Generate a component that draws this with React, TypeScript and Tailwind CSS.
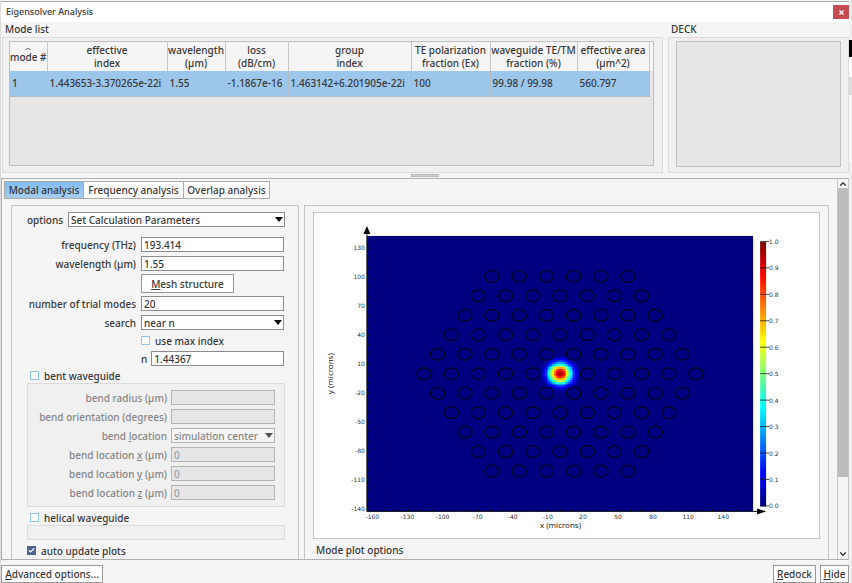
import React from 'react';
import { Check, ChevronDown, ChevronUp, X } from 'lucide-react';

interface ModeColumn {
  width: string;
  title: string[];
  value: string;
}

interface BendField {
  id: string;
  label: React.ReactNode;
  value: string;
}

const columns: ModeColumn[] = [
  { width: 'w-[37px]', title: ['mode #'], value: '1' },
  { width: 'w-[120px]', title: ['effective', 'index'], value: '1.443653-3.370265e-22i' },
  { width: 'w-[58px]', title: ['wavelength', '(µm)'], value: '1.55' },
  { width: 'w-[63px]', title: ['loss', '(dB/cm)'], value: '-1.1867e-16' },
  { width: 'w-[123px]', title: ['group', 'index'], value: '1.463142+6.201905e-22i' },
  { width: 'w-[79px]', title: ['TE polarization', 'fraction (Ex)'], value: '100' },
  { width: 'w-[87px]', title: ['waveguide TE/TM', 'fraction (%)'], value: '99.98 / 99.98' },
  { width: 'w-[72px]', title: ['effective area', '(µm^2)'], value: '560.797' },
];

const inputClass = 'h-[15px] w-full min-w-0 border border-[#8c8c8c] bg-white px-0.5 leading-3 outline-none';
const disabledClass = 'h-[15px] w-[104px] border border-[#b4b4b4] bg-[#e6e6e6] px-0.5 leading-3 text-[#8fa0a8]';
const buttonClass = 'border border-[#999] bg-white whitespace-nowrap';

// Plot geometry, in svg units
const plot = { left: 53, top: 23, right: 440, bottom: 299 };
const px = (x: number) => 247 + x * 1.172;
const py = (y: number) => 161 - y * 0.968;

const xTicks = [-160, -130, -100, -70, -40, -10, 20, 50, 80, 110, 140];
const yTicks = [130, 100, 70, 40, 10, -20, -50, -80, -110, -140];
const xMinor = Array.from({ length: 33 }, (_, i) => -160 + i * 10);
const yMinor = Array.from({ length: 28 }, (_, i) => -140 + i * 10);

// Hexagonal lattice with the centre hole missing
const holes: { x: number; y: number }[] = [];
for (let row = -5; row <= 5; row++) {
  const count = 11 - Math.abs(row);
  for (let i = 0; i < count; i++) {
    const offset = i - (count - 1) / 2;
    if (row === 0 && offset === 0) continue;
    holes.push({ x: 246.5 + offset * 27.25, y: 161 + row * 19.5 });
  }
}

const jet = (v: number) => {
  const channel = (centre: number) =>
    Math.round(255 * Math.max(0, Math.min(1, 1.5 - Math.abs(4 * v - centre))));
  return `rgb(${channel(3)},${channel(2)},${channel(1)})`;
};

const cell = 1.8;
const modeCells: { x: number; y: number; color: string }[] = [];
for (let j = -11; j <= 11; j++) {
  for (let i = -12; i <= 12; i++) {
    const v = Math.exp(-((i * cell) ** 2) / 132 - ((j * cell) ** 2) / 104);
    if (v < 0.03) continue;
    modeCells.push({ x: 246.5 + (i - 0.5) * cell, y: 161 + (j - 0.5) * cell, color: jet(v - 0.03) });
  }
}

const ModePlot: React.FC = () => (
  <svg viewBox="0 0 506 326" className="block w-full border border-[#c4c4c4] bg-white font-['DejaVu_Sans'] text-[6px] font-normal" role="img" aria-label="Mode profile">
    <defs>
      <linearGradient id="jet" x1="0" y1="1" x2="0" y2="0">
        {Array.from({ length: 17 }, (_, i) => (
          <stop key={i} offset={i / 16} stopColor={jet(i / 16)} />
        ))}
      </linearGradient>
    </defs>

    <rect x={plot.left} y={plot.top} width={plot.right - plot.left} height={plot.bottom - plot.top} fill="#000080" />
    <g shapeRendering="crispEdges">
      {modeCells.map((c) => (
        <rect key={`${c.x} ${c.y}`} x={c.x} y={c.y} width={cell} height={cell} fill={c.color} />
      ))}
    </g>
    <g fill="none" stroke="#00001e" strokeWidth="1.2">
      {holes.map((h) => (
        <ellipse key={`${h.x} ${h.y}`} cx={h.x} cy={h.y} rx="7.2" ry="5.9" />
      ))}
    </g>

    <g stroke="#111" strokeWidth="1">
      <path d={`M${plot.left} 18V${plot.bottom}H449`} fill="none" />
      {xMinor.map((x) => <path key={x} d={`M${px(x)} 299v-2`} />)}
      {yMinor.map((y) => <path key={y} d={`M53 ${py(y)}h3`} />)}
    </g>
    <path d="M53 13l3.5 8h-7zM453 299l-9 -3v6z" fill="#000" />

    <g fill="#333" textAnchor="end">
      {yTicks.map((y) => <text key={y} x="51" y={py(y) + 2}>{y}</text>)}
    </g>
    <g fill="#333" textAnchor="middle">
      {xTicks.map((x) => <text key={x} x={px(x) - 1} y="307">{x}</text>)}
    </g>
    <g fill="#222" textAnchor="middle" className="font-['Noto_Sans'] text-[8px]">
      <text x="247" y="316">x (microns)</text>
      <text x="19" y="161" transform="rotate(-90 19 161)">y (microns)</text>
    </g>

    <rect x="447" y="29" width="6" height="265" fill="url(#jet)" />
    {Array.from({ length: 11 }, (_, i) => (
      <g key={i}>
        <path d={`M447 ${293.5 - i * 26.5}h9`} stroke="#111" strokeOpacity="0.75" />
        <text x="456" y={296 - i * 26.5} fill="#333">{(i / 10).toFixed(1)}</text>
      </g>
    ))}
  </svg>
);

const Arrow: React.FC<{ muted?: boolean }> = ({ muted }) => (
  <svg viewBox="0 0 8 5" className={`pointer-events-none absolute top-[5px] right-[2px] h-[5px] w-2 ${muted ? 'text-[#555]' : 'text-black'}`}>
    <path d="M0 0h8L4 5z" fill="currentColor" />
  </svg>
);

const Tick: React.FC<{ id: string; checked?: boolean; children: React.ReactNode }> = ({ id, checked, children }) => (
  <div className="flex h-[15px] items-center gap-[5px]">
    <span className="relative flex">
      <input
        id={id}
        type="checkbox"
        defaultChecked={checked}
        className="peer size-[9px] appearance-none border border-[#94c4ea] bg-white checked:border-[#50648c] checked:bg-[#50648c]"
      />
      <Check className="pointer-events-none absolute top-px left-px hidden size-[7px] text-white peer-checked:block" strokeWidth={4} />
    </span>
    <label htmlFor={id}>{children}</label>
  </div>
);

const ModeList: React.FC = () => (
  <section className="flex min-w-0 flex-1 flex-col">
    <h2 className="h-[15px] px-[3px] leading-[14px]">Mode list</h2>
    <div className="h-[136px] border border-[#dcdcdc] bg-[#f0f0f0] pt-[3px] pr-2 pl-1.5">
      <div className="h-[125px] overflow-hidden border border-[#c0c0c0] bg-[#e6e6e6]">
        <table className="w-full table-fixed border-collapse text-left whitespace-nowrap">
          <thead>
            <tr className="h-[29px] bg-[#f5f5f5]">
              {columns.map((col, i) => (
                <th key={i} className={`${col.width} border-r border-[#c8c8c8] p-0 text-center leading-[13px] font-medium`}>
                  {i === 0 && <ChevronUp className="mx-auto -mb-px h-[6px] w-2.5" strokeWidth={2} preserveAspectRatio="none" />}
                  {col.title.map((line) => (
                    <span key={line} className="flex justify-center">{line}</span>
                  ))}
                  {i === 0 && <span className="block h-1" />}
                </th>
              ))}
              <th className="w-[4px] p-0" />
            </tr>
          </thead>
          <tbody>
            <tr className="h-[25px]">
              {columns.map((col, i) => (
                <td key={i} className="border-r border-b border-[#b4bec8] bg-[#9cc6ea] p-0 pl-0.5">{col.value}</td>
              ))}
              <td />
            </tr>
          </tbody>
        </table>
      </div>
    </div>
  </section>
);

const CalculationForm: React.FC = () => {
  const bendTop: BendField[] = [
    { id: 'radius', label: 'bend radius (µm)', value: '' },
    { id: 'orientation', label: 'bend orientation (degrees)', value: '' },
  ];
  const bendLocation: BendField[] = ['x', 'y', 'z'].map((axis) => ({
    id: `location-${axis}`,
    label: <>bend location <u>{axis}</u> (µm)</>,
    value: '0',
  }));

  const renderBend = (field: BendField) => (
    <React.Fragment key={field.id}>
      <label htmlFor={field.id}>{field.label}</label>
      <input id={field.id} disabled defaultValue={field.value} className={disabledClass} />
    </React.Fragment>
  );

  return (
    <div className="w-72 shrink-0 overflow-hidden border border-b-0 border-[#c4c4c4] pt-[6px] pr-[13px] pl-[15px]">
      <div className="flex items-center justify-end gap-[5px]">
        <label htmlFor="options">options</label>
        <div className="relative w-[217px]">
          <select id="options" className={`${inputClass} block appearance-none`}>
            <option>Set Calculation Parameters</option>
          </select>
          <Arrow />
        </div>
      </div>

      <div className="mt-2.5 grid grid-cols-[1fr_143px] items-center gap-x-[5px] gap-y-1 pr-px text-right">
        <label htmlFor="frequency">frequency (THz)</label>
        <input id="frequency" defaultValue="193.414" className={inputClass} />
        <label htmlFor="wavelength">wavelength (µm)</label>
        <input id="wavelength" defaultValue="1.55" className={inputClass} />
        <button className={`${buttonClass} col-start-2 -my-px h-[19px] w-[93px]`}><u>M</u>esh structure</button>
        <label htmlFor="trials">number of trial modes</label>
        <input id="trials" defaultValue="20" className={inputClass} />
        <label htmlFor="search">search</label>
        <div className="relative">
          <select id="search" className={`${inputClass} block appearance-none`}>
            <option>near n</option>
          </select>
          <Arrow />
        </div>
        <div className="col-start-2 -my-px text-left">
          <Tick id="max-index">use max index</Tick>
        </div>
        <div className="col-start-2 flex items-center gap-1">
          <label htmlFor="index-n">n</label>
          <input id="index-n" defaultValue="1.44367" className={inputClass} />
        </div>
      </div>

      <div className="mt-0.5 pl-[3px]">
        <Tick id="bent">bent waveguide</Tick>
      </div>
      <fieldset className="grid grid-cols-[1fr_104px] items-center gap-x-1 gap-y-1 border border-[#dcdcdc] bg-[#f0f0f0] py-[6px] pr-[9px] text-right text-[#868686]">
        {bendTop.map(renderBend)}
        <label htmlFor="location">bend <u>l</u>ocation</label>
        <div className="relative">
          <select id="location" disabled className="block h-[15px] w-full appearance-none border border-[#b4b4b4] bg-[#f5f5f5] px-0.5 leading-3 opacity-100">
            <option>simulation center</option>
          </select>
          <Arrow muted />
        </div>
        {bendLocation.map(renderBend)}
      </fieldset>

      <div className="mt-[3px] pl-[3px]">
        <Tick id="helical">helical waveguide</Tick>
      </div>
      <div className="h-[15px] border border-[#dcdcdc] bg-[#f0f0f0]" />
      <div className="mt-[3px]">
        <Tick id="auto-update" checked>auto update plots</Tick>
      </div>
    </div>
  );
};

const App: React.FC = () => {
  const tabs = ['Modal analysis', 'Frequency analysis', 'Overlap analysis'];

  return (
    <div className="flex h-screen overflow-hidden bg-[#f5f5f5] font-['Noto_Sans',sans-serif] text-[10px] leading-[14px] font-medium text-[#383838]">
      <main className="flex min-w-0 flex-1 flex-col border-l border-[#dcdcdc]">
        <header className="mt-px flex h-[21px] shrink-0 items-center justify-between border-t border-[#a8a8a8] bg-white pl-[5px] text-[9px]">
          <h1 className="font-medium">Eigensolver Analysis</h1>
          <button aria-label="Close" className="flex h-[14px] w-4 items-center justify-center bg-[#c44d54] text-white">
            <X className="size-[7px]" strokeWidth={4} />
          </button>
        </header>

        <div className="flex shrink-0 gap-[5px] pl-px">
          <ModeList />
          <section className="w-[181px] shrink-0">
            <h2 className="h-[15px] px-[3px] leading-[14px]">DECK</h2>
            <div className="h-[136px] border border-[#dcdcdc] bg-[#f0f0f0] px-[7px] pt-[3px]">
              <div className="h-[126px] border border-[#c0c0c0] bg-[#e6e6e6]" />
            </div>
          </section>
        </div>
        <div className="flex h-[5px] shrink-0 items-center justify-center">
          <div className="h-[3px] w-7 border-y border-dotted border-[#aaa] bg-[#ccc]" />
        </div>

        <div className="flex min-h-0 flex-1 border border-r-0 border-[#b0b0b0]">
          <div className="flex min-w-0 flex-1 flex-col border-r border-[#c8c8c8] pt-0.5 pl-0.5">
            <nav className="flex shrink-0" role="tablist">
              {tabs.map((tab, i) => (
                <button
                  key={tab}
                  role="tab"
                  aria-selected={i === 0}
                  className={`-mr-px h-[18px] border border-[#aaa] whitespace-nowrap ${
                    i === 0 ? 'w-20 bg-linear-to-b from-[#81bcf0] to-[#a6cdee]' : i === 1 ? 'w-[101px] bg-white' : 'w-[87px] bg-white'
                  }`}
                >
                  {tab}
                </button>
              ))}
            </nav>
            <div className="mt-1.5 flex min-h-0 flex-1 gap-[5px] pr-2 pl-[7px]">
              <CalculationForm />
              <div className="min-w-0 flex-1 overflow-hidden border border-b-0 border-[#c4c4c4] px-2 pt-1.5">
                <ModePlot />
                <h2 className="mt-1 px-[3px]">Mode plot options</h2>
              </div>
            </div>
          </div>
          <div className="flex w-[11px] shrink-0 flex-col items-center border-r border-[#c8c8c8]">
            <button aria-label="Scroll up" className="flex h-[9px] items-center"><ChevronUp className="size-[10px]" strokeWidth={3} /></button>
            <div className="flex w-full flex-1 flex-col">
              <div className="h-4/5 w-[10px] bg-[#bcbcbc]" />
            </div>
            <button aria-label="Scroll down" className="flex h-[10px] items-center"><ChevronDown className="size-[10px]" strokeWidth={3} /></button>
          </div>
        </div>

        <footer className="flex h-[23px] shrink-0 items-end">
          <button className={`${buttonClass} mr-auto h-[18px] w-[102px]`}><u>A</u>dvanced options...</button>
          <div className="flex gap-1">
            <button className={`${buttonClass} h-[18px] w-[43px]`}><u>R</u>edock</button>
            <button className={`${buttonClass} h-[18px] w-[29px]`}><u>H</u>ide</button>
          </div>
        </footer>
      </main>
      <aside className="flex w-[3px] shrink-0 flex-col bg-[#eee]">
        <div className="mt-10 h-[17px] bg-black" />
        <div className="h-5 bg-white" />
        <div className="h-[18px] bg-[#ddd]" />
        <div className="h-[68px] bg-[#f8f8f8]" />
      </aside>
    </div>
  );
};

export default App;
